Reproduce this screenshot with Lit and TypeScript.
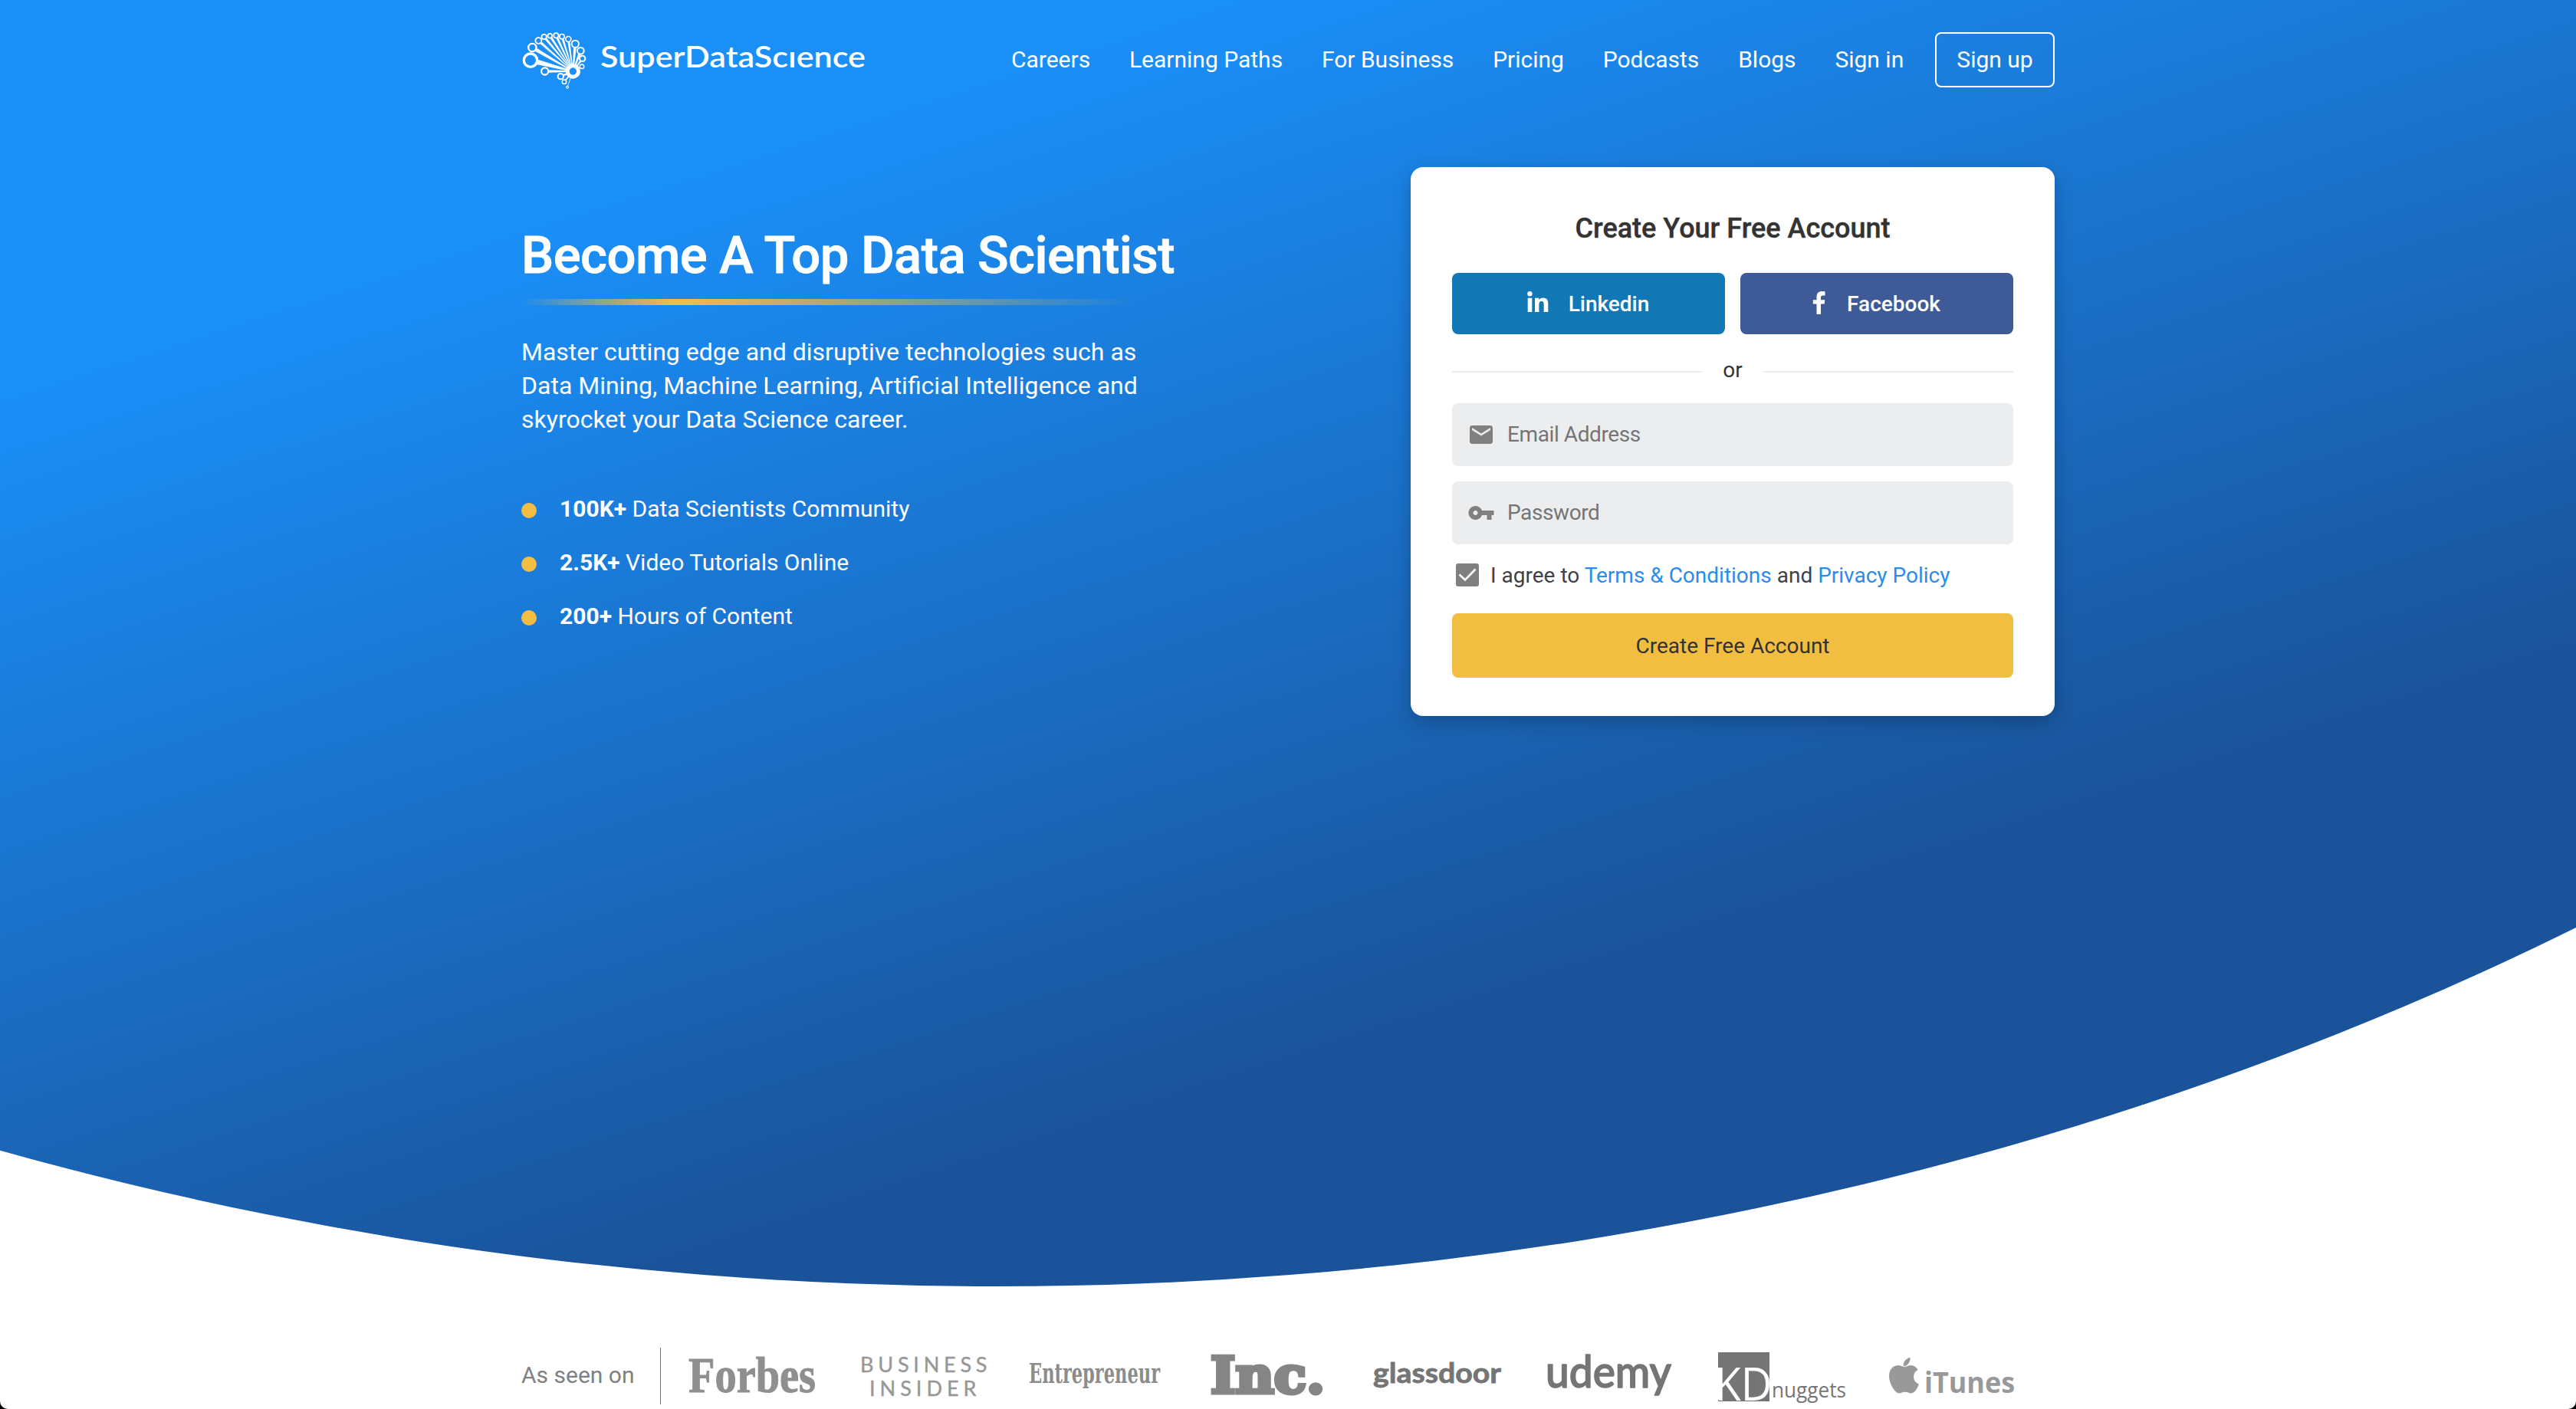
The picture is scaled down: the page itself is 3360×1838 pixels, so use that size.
import { LitElement, html, css, svg } from "lit";
import { customElement } from "lit/decorators.js";

type LogoNode = { x: number; y: number; r: number; hole: number; from: number; to: number };

const HUB = { x: 232, y: 174 };

// Outer circles of the brand mark with the widths of their tapered spokes.
const NODES: LogoNode[] = [
  { x: 66, y: 131, r: 31, hole: 21, from: 20, to: 4 },
  { x: 73, y: 81, r: 19, hole: 12, from: 14, to: 3 },
  { x: 97, y: 54, r: 14.5, hole: 9, from: 10, to: 2 },
  { x: 119, y: 39, r: 12, hole: 7, from: 9, to: 2 },
  { x: 142, y: 35, r: 11, hole: 6, from: 9, to: 2 },
  { x: 166, y: 34, r: 12, hole: 7, from: 9, to: 2 },
  { x: 189, y: 38, r: 12, hole: 7, from: 9, to: 2 },
  { x: 214, y: 48, r: 13, hole: 8, from: 9, to: 3 },
  { x: 241, y: 67, r: 17, hole: 11, from: 11, to: 4 },
  { x: 262, y: 94, r: 16, hole: 10, from: 10, to: 4 },
  { x: 269, y: 124, r: 14, hole: 8, from: 8, to: 4 },
  { x: 267, y: 155, r: 10.5, hole: 6, from: 5, to: 3 },
  { x: 122, y: 174, r: 17, hole: 10.5, from: 10, to: 4 },
  { x: 184, y: 194, r: 14, hole: 8, from: 8, to: 6 },
  { x: 198, y: 215, r: 10.5, hole: 6, from: 6, to: 4 },
  { x: 210, y: 236, r: 6, hole: 2.5, from: 2.5, to: 2.5 },
];

function spoke(n: LogoNode): string {
  const dx = HUB.x - n.x;
  const dy = HUB.y - n.y;
  const len = Math.hypot(dx, dy);
  const px = -dy / len;
  const py = dx / len;
  const sx = n.x + (dx / len) * (n.hole + 1);
  const sy = n.y + (dy / len) * (n.hole + 1);
  const a = n.from / 2;
  const b = n.to / 2;
  return [
    [sx + px * a, sy + py * a],
    [sx - px * a, sy - py * a],
    [HUB.x - px * b, HUB.y - py * b],
    [HUB.x + px * b, HUB.y + py * b],
  ]
    .map((p) => p.map((v) => v.toFixed(1)).join(","))
    .join(" ");
}

@customElement("brand-logo")
export class BrandLogo extends LitElement {
  static styles = css`
    :host {
      display: flex;
      align-items: flex-start;
      gap: 18px;
    }
    .mark {
      width: 85px;
      height: 74px;
      flex: none;
    }
    .word {
      width: 350px;
      height: 74px;
      flex: none;
      overflow: visible;
    }
    .word text {
      font-family: Lato, "Open Sans", sans-serif;
      font-weight: 600;
      font-size: 39px;
      fill: #fff;
    }
  `;
  render() {
    return html`
      <svg class="mark" viewBox="30 21 255 222" fill="#fff">
        ${NODES.map(
          (n) => svg`<polygon points=${spoke(n)} />
            <circle cx=${n.x} cy=${n.y} r=${(n.r + n.hole) / 2} fill="none"
              stroke="#fff" stroke-width=${n.r - n.hole} />`,
        )}
        <circle cx="232" cy="174" r="29" />
        <circle cx="232" cy="174" r="14" fill="#1a8ff8" />
      </svg>
      <svg class="word" viewBox="0 0 350 74" aria-label="SuperDataScience">
        <text x="0" y="46" textLength="346" lengthAdjust="spacingAndGlyphs">SuperDataScıence</text>
      </svg>
    `;
  }
}

@customElement("site-header")
export class SiteHeader extends LitElement {
  static styles = css`
    :host {
      display: flex;
      justify-content: space-between;
      align-items: flex-start;
      height: 72px;
      padding-top: 42px;
    }
    nav {
      display: flex;
      align-items: center;
      gap: 50.8px;
      line-height: 72px;
      font-size: 30px;
    }
    a {
      color: #fff;
      white-space: nowrap;
    }
    .signup {
      box-sizing: border-box;
      width: 156px;
      height: 72px;
      line-height: 68px;
      text-align: center;
      margin-left: -10px;
      border: 2px solid #fff;
      border-radius: 8px;
    }
  `;
  private links = ["Careers", "Learning Paths", "For Business", "Pricing", "Podcasts", "Blogs", "Sign in"];
  render() {
    return html`
      <brand-logo></brand-logo>
      <nav>
        ${this.links.map((l) => html`<a>${l}</a>`)}
        <a class="signup">Sign up</a>
      </nav>
    `;
  }
}

@customElement("hero-copy")
export class HeroCopy extends LitElement {
  static styles = css`
    :host {
      display: block;
      padding-top: 75px;
      color: #fff;
    }
    h1 {
      margin: 0;
      font-size: 67px;
      font-weight: 500;
      line-height: 80px;
      letter-spacing: -0.56px;
      white-space: nowrap;
      -webkit-text-stroke: 0.8px #fff;
    }
    .rule {
      width: 800px;
      height: 8px;
      margin-top: 17px;
      background: linear-gradient(90deg, rgba(242, 190, 66, 0), #f2be42 25%, rgba(242, 190, 66, 0));
    }
    p {
      width: 830px;
      margin: 39px 0 0;
      font-size: 32px;
      line-height: 44px;
    }
    ul {
      list-style: none;
      margin: 60px 0 0;
      padding: 0;
      font-size: 30px;
      line-height: 70px;
    }
    li {
      display: flex;
      align-items: center;
      gap: 30px;
    }
    .dot {
      width: 20px;
      height: 20px;
      margin-top: 4px;
      border-radius: 50%;
      background: #f2be42;
    }
    b {
      font-weight: 700;
    }
  `;
  private facts = [
    ["100K+", "Data Scientists Community"],
    ["2.5K+", "Video Tutorials Online"],
    ["200+", "Hours of Content"],
  ];
  render() {
    return html`
      <h1>Become A Top Data Scientist</h1>
      <div class="rule"></div>
      <p>
        Master cutting edge and disruptive technologies such as<br />Data Mining, Machine Learning, Artificial
        Intelligence and<br />skyrocket your Data Science career.
      </p>
      <ul>
        ${this.facts.map(([n, t]) => html`<li><span class="dot"></span><span><b>${n}</b> ${t}</span></li>`)}
      </ul>
    `;
  }
}

@customElement("signup-card")
export class SignupCard extends LitElement {
  static styles = css`
    :host {
      display: block;
      box-sizing: border-box;
      width: 840px;
      height: 716px;
      padding: 58px 54px 50px;
      border-radius: 16px;
      background: #fff;
      box-shadow: 0 8px 24px rgba(0, 0, 0, 0.22);
      color: #333;
      font-size: 28px;
    }
    h2 {
      margin: 0 0 36px;
      font-size: 36px;
      font-weight: 500;
      line-height: 44px;
      text-align: center;
      -webkit-text-stroke: 0.4px #333;
    }
    .social {
      display: grid;
      grid-template-columns: 1fr 1fr;
      gap: 20px;
    }
    .btn {
      display: flex;
      justify-content: center;
      align-items: center;
      height: 80px;
      border-radius: 8px;
      color: #fff;
      font-weight: 500;
    }
    .linkedin {
      background: #1278b5;
      gap: 26px;
    }
    .facebook {
      background: #3e5b98;
      gap: 28px;
    }
    .linkedin svg {
      margin: -5px 0 0 -1px;
    }
    .facebook svg {
      margin: -2px 0 0 -1px;
    }
    .or {
      display: flex;
      align-items: center;
      box-sizing: border-box;
      height: 90px;
      padding-top: 3px;
    }
    .or i {
      flex: 1;
      height: 2px;
      margin-top: 5px;
      background: #ecedef;
    }
    .or span {
      width: 80px;
      text-align: center;
    }
    .field {
      display: flex;
      align-items: center;
      gap: 16px;
      height: 82px;
      padding-left: 20px;
      margin-bottom: 20px;
      border-radius: 8px;
      background: #ecedef;
      color: #757575;
      letter-spacing: -0.4px;
    }
    .field span {
      margin-top: -2px;
    }
    .agree {
      display: flex;
      align-items: center;
      gap: 15px;
      height: 80px;
      margin: -20px 0 10px;
      padding-left: 5px;
      color: #3f4147;
    }
    .agree a {
      color: #2b8ceb;
    }
    .submit {
      height: 84px;
      line-height: 85px;
      border-radius: 8px;
      background: #f2be42;
      text-align: center;
    }
    svg {
      flex: none;
      display: block;
    }
  `;
  render() {
    return html`
      <h2>Create Your Free Account</h2>
      <div class="social">
        <div class="btn linkedin">
          <svg width="28" height="27" viewBox="0 0 28 27" fill="#fff">
            <circle cx="3.4" cy="3.2" r="3.2" />
            <path
              d="M.7 8.8h5.6V27H.7zM10 8.8h5.3v2.5c.9-1.6 2.7-2.9 5.4-2.9 5.6 0 6.6 3.6 6.6 8.4V27h-5.6v-9c0-2.200-.1-4.900-3-4.900s-3.300 2.300-3.300 4.700V27H10z"
            />
          </svg>
          <span>Linkedin</span>
        </div>
        <div class="btn facebook">
          <svg width="17" height="30" viewBox="0 0 17 30" fill="#fff">
            <path
              d="M11 30V16.500h4.600l.7-5.300H11V8c0-1.600.5-2.600 2.700-2.600h2.800V.400C16 .2 14.400 0 12.500 0 8.300 0 5.500 2.500 5.500 7.200v4H.8v5.300h4.700V30z"
            />
          </svg>
          <span>Facebook</span>
        </div>
      </div>
      <div class="or"><i></i><span>or</span><i></i></div>
      <div class="field">
        <svg width="36" height="36" viewBox="0 0 24 24" fill="#808080">
          <path
            d="M20 4H4c-1.100 0-1.990.9-1.990 2L2 18c0 1.100.9 2 2 2h16c1.100 0 2-.9 2-2V6c0-1.100-.9-2-2-2zm0 4l-8 5-8-5V6l8 5 8-5v2z"
          />
        </svg>
        <span>Email Address</span>
      </div>
      <div class="field">
        <svg width="36" height="36" viewBox="0 0 24 24" fill="#808080">
          <path
            d="M12.650 10C11.830 7.670 9.610 6 7 6c-3.310 0-6 2.690-6 6s2.690 6 6 6c2.610 0 4.830-1.670 5.650-4H17v4h4v-4h2v-4H12.650zM7 14c-1.100 0-2-.9-2-2s.9-2 2-2 2 .9 2 2-.9 2-2 2z"
          />
        </svg>
        <span>Password</span>
      </div>
      <div class="agree">
        <svg width="30" height="30" viewBox="0 0 30 30">
          <rect width="30" height="30" rx="3" fill="#808080" />
          <path d="M4.500 14.500l7.500 7 13.500-14" fill="none" stroke="#fff" stroke-width="2.600" />
        </svg>
        <span>I agree to <a>Terms &amp; Conditions</a> and <a>Privacy Policy</a></span>
      </div>
      <div class="submit">Create Free Account</div>
    `;
  }
}

@customElement("press-row")
export class PressRow extends LitElement {
  static styles = css`
    :host {
      display: flex;
      align-items: center;
      height: 74px;
      color: #808080;
      font-size: 30px;
    }
    .label {
      box-sizing: border-box;
      width: 182px;
      height: 74px;
      line-height: 72px;
      border-right: 1px solid #757575;
      white-space: nowrap;
    }
    .logos {
      display: grid;
      grid-template-columns: repeat(8, 223.5px);
      justify-items: center;
      margin-left: 7px;
    }
    svg {
      display: block;
      height: 74px;
      overflow: visible;
    }
    .forbes {
      font: 700 65px "Liberation Serif", serif;
      fill: #8f8f8f;
      stroke: #8f8f8f;
      stroke-width: 1px;
    }
    .insider {
      font: 400 27px Lato, sans-serif;
      fill: #979797;
      stroke: #979797;
      stroke-width: 0.4px;
    }
    .entrepreneur {
      font: 700 35px "DejaVu Serif Condensed", "DejaVu Serif", serif;
      fill: #8c8c8c;
    }
    .inc {
      font: 700 65px "DejaVu Serif", serif;
      fill: #858585;
      stroke: #858585;
      stroke-width: 5px;
    }
    .glassdoor {
      font: 700 37px Lato, sans-serif;
      fill: #757575;
      stroke: #757575;
      stroke-width: 0.8px;
    }
    .udemy {
      font: 500 58px Lato, sans-serif;
      fill: #757575;
      stroke: #757575;
      stroke-width: 1.6px;
      stroke-linejoin: round;
    }
    .kd {
      font: 400 60px "Open Sans", sans-serif;
      fill: #fff;
    }
    .nuggets {
      font: 400 28px "Open Sans", sans-serif;
      fill: #757575;
    }
    .itunes {
      font: 700 37px "Open Sans", sans-serif;
      fill: #999;
    }
  `;
  render() {
    return html`
      <div class="label">As seen on</div>
      <div class="logos">
        <svg width="166" viewBox="0 0 166 74">
          <text class="forbes" x="0" y="58" textLength="166" lengthAdjust="spacingAndGlyphs">Forbes</text>
        </svg>
        <svg width="164" viewBox="0 0 164 74">
          <text class="insider" x="0" y="32" textLength="169">
            <tspan letter-spacing="3.500">BUSINESS</tspan>
          </text>
          <text class="insider" x="12" y="63" textLength="143">
            <tspan letter-spacing="3.500">INSIDER</tspan>
          </text>
        </svg>
        <svg width="171" viewBox="0 0 171 74">
          <text class="entrepreneur" x="0" y="46" textLength="171" lengthAdjust="spacingAndGlyphs">Entrepreneur</text>
        </svg>
        <svg width="143" viewBox="0 0 143 74">
          <text class="inc" x="-1" y="59" textLength="149" lengthAdjust="spacingAndGlyphs">Inc.</text>
        </svg>
        <svg width="166" viewBox="0 0 166 74">
          <text class="glassdoor" x="-1" y="46" textLength="167" lengthAdjust="spacingAndGlyphs">glassdoor</text>
        </svg>
        <svg width="161" viewBox="0 0 161 74">
          <text class="udemy" x="-2" y="52" textLength="164" lengthAdjust="spacingAndGlyphs">udemy</text>
        </svg>
        <svg width="182" viewBox="-10 0 182 74">
          <rect x="0" y="6" width="67" height="64" fill="#757575" />
          <rect x="0" y="26" width="4" height="42" fill="#fff" />
          <text class="kd" x="-4.500" y="69" textLength="75" lengthAdjust="spacingAndGlyphs">KD</text>
          <text class="nuggets" x="70" y="65" textLength="97" lengthAdjust="spacingAndGlyphs">nuggets</text>
        </svg>
        <svg width="164" viewBox="0 0 164 74">
          <path
            fill="#999"
            d="M28.500 13c.5 3.500-1 6.600-2.900 8.500-1.700 1.800-4 2.700-5.900 2.600-.4-3.300 1.100-6.200 2.800-8 1.600-1.700 4-2.900 6-3.100zM38.600 28.700c-3.500 2-5.600 5.200-5.500 9.200.1 4.800 2.700 7.900 6.900 9.600-.8 2.600-2.100 5.100-3.800 7.500-2 2.800-4 4.500-6.700 4.500-2.900 0-4-1.700-7.600-1.700-3.500 0-4.900 1.700-7.500 1.700-2.900 0-5.100-2.200-7.300-5.200C3.300 49 1 42.500 1 37c0-9 5.800-14 11.800-14 3.200 0 5.500 1.900 8.100 1.900 2.500 0 5.200-2 9-2 3.500 0 6.700 2.200 8.700 5.800z"
          />
          <text class="itunes" x="47" y="59" textLength="118" lengthAdjust="spacingAndGlyphs">iTunes</text>
        </svg>
      </div>
    `;
  }
}

@customElement("app-root")
export class AppRoot extends LitElement {
  static styles = css`
    :host {
      display: block;
      height: 1838px;
      overflow: hidden;
      background: #000;
      font-family: Roboto, "Liberation Sans", sans-serif;
    }
    .page {
      height: 1838px;
      overflow: hidden;
      background: #fff;
      border-radius: 0 0 10px 10px;
    }
    .hero {
      height: 1678px;
      background: linear-gradient(162.1deg, #1a8ff8 18.600%, #1a539a 70%);
      clip-path: ellipse(3900px 3101px at 1300px -1423px);
    }
    .wrap {
      width: 2000px;
      margin: 0 auto;
    }
    .main {
      display: flex;
      justify-content: space-between;
      align-items: flex-start;
      padding-top: 104px;
    }
    .press {
      padding-top: 80px;
    }
  `;
  render() {
    return html`
      <div class="page">
        <section class="hero">
          <div class="wrap">
            <site-header></site-header>
            <div class="main">
              <hero-copy></hero-copy>
              <signup-card></signup-card>
            </div>
          </div>
        </section>
        <div class="wrap press"><press-row></press-row></div>
      </div>
    `;
  }
}
